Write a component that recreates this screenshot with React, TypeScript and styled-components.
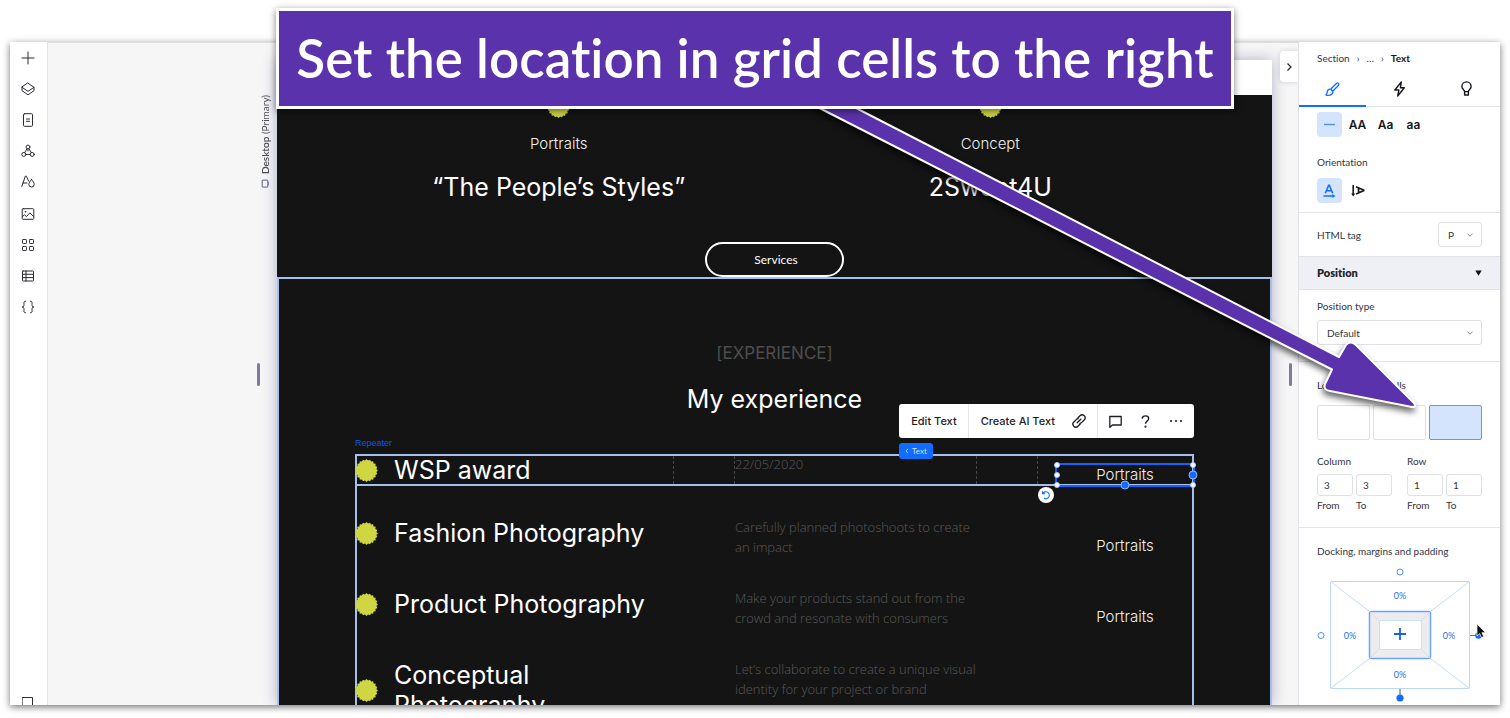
import React from "react";
import styled, { createGlobalStyle, css } from "styled-components";

const uiFont = '"Lato", "Open Sans", sans-serif';
const siteFont = '"Inter", "Open Sans", sans-serif';
const blue = "#116dff";
const frame = "#a6c0ee";
const ink = "#141414";

const GlobalStyle = createGlobalStyle`
  *, *::before, *::after { box-sizing: border-box; }
  body { margin: 0; background: #fff; }
  button, input, select { font: inherit; color: inherit; margin: 0; }
  button { border: 0; padding: 0; background: none; cursor: pointer; }
  h1, h2, h3, p, ul { margin: 0; padding: 0; font-weight: inherit; list-style: none; }
`;

const Page = styled.div`
  position: relative;
  display: flex;
  height: 100vh;
  padding: 42px 10px 13px;
  overflow: hidden;
  font-family: ${uiFont};
  font-size: 10px;
  font-variant-ligatures: none;
  color: #33343d;
`;

const Editor = styled.div`
  display: flex;
  flex: 1;
  min-width: 0;
  background: #f6f6f6;
  box-shadow: 0 2px 7px rgba(0, 0, 0, 0.55);
  overflow: hidden;
`;

/* ---------- left rail ---------- */

const Rail = styled.nav`
  display: flex;
  flex-direction: column;
  justify-content: space-between;
  width: 38px;
  padding-right: 1px;
  background: #fff;
  border-right: 1px solid #e2e2e4;
  overflow: hidden;
`;

const RailList = styled.div`
  display: flex;
  flex-direction: column;
  height: 281px;
`;

const RailButton = styled.button<{ $clipped?: boolean }>`
  display: grid;
  place-items: center;
  flex: ${(p) => (p.$clipped ? "none" : "1")};
  ${(p) => p.$clipped && css`height: 24px; margin-bottom: -10px;`}
  svg { stroke: #2b2c33; fill: none; stroke-width: 1; stroke-linejoin: round; stroke-linecap: round; }
`;

/* ---------- workspace ---------- */

const Workspace = styled.main`
  display: grid;
  grid-template-columns: 229px minmax(0, 1fr) 26px;
  grid-template-rows: minmax(0, 1fr);
  flex: 1;
  min-width: 0;
  border-top: 1px solid #dcdcde;
  overflow: hidden;
`;

const Gutter = styled.div<{ $pad: number }>`
  display: grid;
  grid-template-rows: minmax(0, 1fr) 23px minmax(0, 1fr);
  justify-items: end;
  padding-right: ${(p) => p.$pad}px;
`;

const Breakpoint = styled.div`
  display: flex;
  align-items: center;
  gap: 5px;
  align-self: start;
  margin: 52px -12px 0 0;
  writing-mode: vertical-rl;
  transform: rotate(180deg);
  font-size: 10px;
  line-height: 14px;
  color: #4a4b55;
  b { font-weight: 600; }
`;

const Handle = styled.span`
  grid-row: 2;
  width: 3px;
  border-radius: 2px;
  background: #7c7b9c;
`;

const CollapseButton = styled.button`
  display: grid;
  place-items: center;
  width: 18px;
  height: 31px;
  margin: 8px -6px 0 0;
  border-radius: 4px 0 0 4px;
  background: #fff;
  box-shadow: 0 0 5px rgba(60, 60, 90, 0.2);
`;

const Stage = styled.div`
  display: flex;
  flex-direction: column;
  margin-top: 17px;
  background: ${ink};
  box-shadow: 0 0 14px rgba(90, 90, 150, 0.45);
  color: #fff;
`;

const SiteHeader = styled.header`
  flex: none;
  height: 35px;
  background: #fff;
`;

const Features = styled.section`
  display: flex;
  flex: none;
  flex-direction: column;
  align-items: center;
  height: 182px;
  padding: 0 66px;
`;

const FeatureRow = styled.div`
  display: grid;
  grid-template-columns: 1fr 1fr;
  align-self: stretch;
`;

const Feature = styled.article`
  display: flex;
  flex-direction: column;
  align-items: center;
`;

const Small = styled.p`
  font-family: ${siteFont};
  font-size: 15px;
  line-height: 20px;
  font-weight: 300;
  text-align: center;
  color: #f0f0f0;
`;

const FeatureLabel = styled(Small)`
  margin-top: 16px;
`;

const Title = styled.h2`
  font-family: ${siteFont};
  font-size: 25px;
  line-height: 30px;
  font-weight: 400;
`;

const FeatureTitle = styled(Title)`
  margin-top: 18px;
`;

const PillButton = styled.button`
  width: 139px;
  height: 35px;
  margin-top: auto;
  padding-left: 3px;
  border: 2px solid #fff;
  border-radius: 18px;
  font-size: 12px;
  color: #fff;
`;

const Experience = styled.section`
  display: flex;
  flex: 1 0 auto;
  flex-direction: column;
  align-items: center;
  padding: 64px 76px 0;
  border: 2px solid ${frame};
`;

const Eyebrow = styled.p`
  font-family: ${siteFont};
  font-size: 17px;
  line-height: 20px;
  color: #4d4d4d;
`;

const ExperienceTitle = styled(Title)`
  margin-top: 21px;
`;

const Repeater = styled.div`
  position: relative;
  display: flex;
  flex: 1;
  flex-direction: column;
  gap: 31px;
  align-self: stretch;
  margin-top: 40px;
  border: 2px solid ${frame};
`;

const Item = styled.article<{ $active?: boolean }>`
  position: relative;
  display: grid;
  grid-template-columns: 316fr 241fr 154fr;
  column-gap: 62px;
  min-height: 40px;
  ${(p) =>
    p.$active &&
    css`
      height: 32px;
      min-height: 0;
      margin: -2px -2px 0;
      border: 2px solid ${frame};
    `}
`;

const ItemName = styled.div<{ $active?: boolean }>`
  display: flex;
  align-items: center;
  align-self: start;
  gap: 16px;
  margin: ${(p) => (p.$active ? "-1px 0 0 -2px" : "1px 0 8px -2px")};
  svg { flex: none; }
`;

const ItemText = styled.p<{ $date?: boolean }>`
  margin: ${(p) => (p.$date ? -2 : 0)}px -8px 0 0;
  font-family: "Open Sans", sans-serif;
  font-size: 13px;
  line-height: 20px;
  font-weight: 300;
  color: #5a5a5a;
`;

const ItemKind = styled(Small)`
  align-self: end;
  margin: 0 -2px 1px 18px;
`;

const Guides = styled.div`
  position: absolute;
  inset: 0;
  display: grid;
  grid-template-columns: 316fr 62px 241fr 62px 154fr;
  span:nth-child(even) { border: 1px dashed #454545; border-width: 0 1px; }
`;

const SelectedText = styled.div`
  position: absolute;
  top: 7px;
  right: -3px;
  width: 140px;
  height: 24px;
  border: 2px solid #0f62fe;
`;

const Knob = styled.i<{ $x: number; $y: number; $dock?: boolean }>`
  position: absolute;
  left: ${(p) => p.$x}%;
  top: ${(p) => p.$y}%;
  width: ${(p) => (p.$dock ? 9 : 6)}px;
  height: ${(p) => (p.$dock ? 9 : 6)}px;
  transform: translate(-50%, -50%);
  border-radius: 50%;
  background: ${(p) => (p.$dock ? "#116dff" : "#fff")};
  border: ${(p) => (p.$dock ? "1px solid #8fb4f5" : "1px solid #a9c8ff")};
`;

const UndoButton = styled.button`
  position: absolute;
  top: 31px;
  right: 138px;
  display: grid;
  place-items: center;
  width: 16px;
  height: 16px;
  border-radius: 50%;
  background: #fff;
`;

const RepeaterLabel = styled.span`
  position: absolute;
  left: -2px;
  top: -19px;
  font: 9px/12px "Liberation Sans", sans-serif;
  color: #0f55e8;
`;

const FloatingBar = styled.div`
  position: absolute;
  right: -2px;
  top: -52px;
  display: flex;
  height: 34px;
  border-radius: 3px;
  background: #fff;
  color: #1c1d24;
  font-family: ${siteFont};
  font-size: 11px;
`;

const BarGroup = styled.div`
  display: flex;
  align-items: center;
  gap: 17px;
  padding: 0 11px 0 12px;
  & + & { border-left: 1px solid #e6e6ea; }
  & + & + & { padding-left: 11px; }
  button { display: grid; place-items: center; font-weight: 500; }
  svg { display: block; }
`;

const TextTag = styled.button`
  position: absolute;
  right: 259px;
  top: -13px;
  display: flex;
  align-items: center;
  justify-content: center;
  gap: 3px;
  width: 34px;
  height: 16px;
  border-radius: 3px;
  background: #116dff;
  font-size: 8px;
  color: #cfe0ff;
`;

/* ---------- inspector ---------- */

const Inspector = styled.aside`
  width: 202px;
  flex: none;
  background: #fff;
  border-left: 1px solid #e0e0e6;
  line-height: 16px;
  overflow: hidden;
`;

const Crumbs = styled.nav`
  display: flex;
  align-items: center;
  gap: 7px;
  height: 31px;
  padding: 0 18px;
  b { font-weight: 700; color: #16171d; }
`;

const Tabs = styled.div`
  display: grid;
  grid-template-columns: repeat(3, 1fr);
  height: 34px;
  border-bottom: 1px solid #e3e3e9;
`;

const Tab = styled.button<{ $active?: boolean }>`
  display: grid;
  place-items: center;
  color: ${(p) => (p.$active ? blue : "#16171d")};
  border-bottom: 2px solid ${(p) => (p.$active ? blue : "transparent")};
  margin-bottom: -1px;
`;

const Section = styled.section<{ $pad: string }>`
  padding: ${(p) => p.$pad};
  border-bottom: 1px solid #e3e3e9;
  &:last-child { border-bottom: 0; }
`;

const Inline = styled.div`
  display: flex;
  align-items: center;
  gap: 3px;
`;

const Label = styled.label<{ $mt?: number; $mb?: number }>`
  display: block;
  margin-top: ${(p) => p.$mt ?? 0}px;
  margin-bottom: ${(p) => p.$mb ?? 0}px;
`;

const Toggle = styled.button<{ $active?: boolean }>`
  display: grid;
  place-items: center;
  width: 25px;
  height: 25px;
  border-radius: 4px;
  font-family: ${siteFont};
  font-size: 12px;
  font-weight: 600;
  color: ${(p) => (p.$active ? blue : "#16171d")};
  background: ${(p) => (p.$active ? "#d5e4fd" : "transparent")};
`;

const SelectBox = styled.span<{ $width: string }>`
  display: grid;
  align-items: center;
  width: ${(p) => p.$width};
  height: 25px;
  margin-left: auto;
  select, svg { grid-area: 1 / 1; }
  svg { justify-self: end; margin-right: 9px; pointer-events: none; }
  select {
    appearance: none;
    width: 100%;
    height: 25px;
    padding: 0 9px;
    border: 1px solid #dfe0e6;
    border-radius: 3px;
    background: #fff;
  }
`;

const PanelHeader = styled.button`
  display: flex;
  align-items: center;
  justify-content: space-between;
  width: 100%;
  height: 33px;
  padding: 0 18px;
  border-bottom: 1px solid #e3e3e9;
  background: #eff0f5;
  font-size: 11px;
  font-weight: 800;
  color: #24252c;
`;

const Cells = styled.div`
  display: grid;
  grid-template-columns: repeat(3, 1fr);
  gap: 3px;
`;

const Cell = styled.button<{ $active?: boolean }>`
  height: 35px;
  border: 1px solid ${(p) => (p.$active ? "#5b9bff" : "#d3e1f4")};
  border-radius: 2px;
  background: ${(p) => (p.$active ? "#d5e4fd" : "#fff")};
`;

const Ranges = styled.div`
  display: grid;
  grid-template-columns: 1fr 1fr;
  gap: 15px;
  margin-top: 13px;
`;

const Range = styled.fieldset`
  display: grid;
  grid-template-columns: 1fr 1fr;
  column-gap: 3px;
  min-width: 0;
  margin: 0;
  padding: 0;
  border: 0;
  legend { padding: 0; margin-bottom: 5px; }
  label { display: flex; flex-direction: column; gap: 1px; }
  input {
    width: 100%;
    height: 22px;
    padding: 0 6px;
    border: 1px solid #dfe0e6;
    border-radius: 3px;
    background: #fff;
  }
`;

const Docking = styled.svg`
  display: block;
  margin-top: 6px;
  overflow: visible;
  text { font: 9px ${uiFont}; fill: #2a6fe6; text-anchor: middle; }
`;

/* ---------- annotation ---------- */

const Arrow = styled.svg`
  position: absolute;
  top: 90px;
  right: 80px;
  overflow: visible;
  pointer-events: none;
  filter: drop-shadow(-1px 4px 3px rgba(0, 0, 0, 0.6));
`;

const Callout = styled.h1`
  position: absolute;
  top: 8px;
  left: 50%;
  transform: translateX(-50%);
  width: 958px;
  height: 101px;
  border: 3px solid #fff;
  background: #5a32ab;
  box-shadow: 0 2px 7px rgba(0, 0, 0, 0.5);
  font-family: "Lato", sans-serif;
  font-size: 53px;
  line-height: 94px;
  font-weight: 600;
  text-align: center;
  white-space: nowrap;
  color: #fff;
`;

const badgePoints = Array.from({ length: 40 }, (_, i) => {
  const r = i % 2 ? 10 : 11.4;
  const a = (i * Math.PI) / 20;
  return `${(11.5 + r * Math.cos(a)).toFixed(2)},${(11.5 + r * Math.sin(a)).toFixed(2)}`;
}).join(" ");

const Badge = () => (
  <svg width="23" height="23" viewBox="0 0 23 23" aria-hidden="true">
    <polygon points={badgePoints} fill="#d0d641" />
  </svg>
);

const Chevron = ({ size = 6, color = "#7d7e8a" }: { size?: number; color?: string }) => (
  <svg width={size} height={size} viewBox="0 0 6 6" fill="none" stroke={color} strokeWidth="0.9">
    <path d="M0.5 1.8 3 4.2 5.5 1.8" />
  </svg>
);

const railIcons: [string, React.ReactNode][] = [
  ["Add", <path d="M7 1v12M1 7h12" />],
  ["Layers", <path d="M7 1.2 13 5.300 7 9.400 1 5.300ZM1 5.300v3.400L7 12.800l6-4.100v-3.400" />],
  ["Pages", <path d="M3.5.7h7a1 1 0 0 1 1 1v10.600a1 1 0 0 1-1 1h-7a1 1 0 0 1-1-1V1.700a1 1 0 0 1 1-1ZM5.500 6h3M5.500 8.300h3" />],
  ["Masters", <><circle cx="7" cy="3" r="1.900" /><circle cx="2.800" cy="10.400" r="2" /><circle cx="11.200" cy="10.400" r="2" /><path d="M5.900 5 3.700 8.600M8.100 5 10.300 8.600M4.800 10.400h4.400M7 5v2" /></>],
  ["Typography & colors", <><path d="M.8 11.500 4.300 1.200h1L7.600 6M2 8h4" /><path d="M10.500 4.500c1.700 2 2.700 3.500 2.700 4.800a2.700 2.700 0 0 1-5.400 0c0-1.300 1-2.800 2.700-4.800Z" /></>],
  ["Media", <><rect x="1.200" y="1.700" width="11.600" height="10.600" rx="1" /><path d="M1.500 9.500 3.500 7.800 5.500 9.600 8.800 5.800 12.500 9.500" /><circle cx="4.400" cy="4.800" r=".3" /></>],
  ["Apps", <><rect x="1.500" y="1.500" width="4" height="4" rx=".7" /><rect x="8.500" y="1.500" width="4" height="4" rx=".7" /><rect x="1.500" y="8.500" width="4" height="4" rx=".7" /><rect x="8.500" y="8.500" width="4" height="4" rx=".7" /></>],
  ["CMS", <><rect x="1.500" y="2" width="11" height="10" rx=".6" /><path d="M1.500 5.300h11M1.500 8.600h11M5 2v10" /></>],
  ["Code", <path d="M4.500 1.200C2.500 1.200 3 2.700 3 4.500 3 6.500 2.300 7 1 7c1.300 0 2 .5 2 2.500C3 11.300 2.500 12.800 4.500 12.800M9.500 1.200c2 0 1.500 1.500 1.500 3.300 0 2 .7 2.500 2 2.500-1.300 0-2 .5-2 2.500 0 1.800.5 3.300-1.500 3.300" />],
];

const items = [
  { name: "Fashion Photography", text: "Carefully planned photoshoots to create an impact" },
  { name: "Product Photography", text: "Make your products stand out from the crowd and resonate with consumers" },
  { name: "Conceptual Photography", text: "Let’s collaborate to create a unique visual identity for your project or brand" },
];

const knobs: [number, number][] = [[0, 0], [100, 0], [0, 50], [0, 100], [100, 100]];

const RangeFields = ({ title, value }: { title: string; value: string }) => (
  <Range>
    <legend>{title}</legend>
    <label>
      <input defaultValue={value} />
      From
    </label>
    <label>
      <input defaultValue={value} />
      To
    </label>
  </Range>
);

export default function App() {
  return (
    <Page>
      <GlobalStyle />
      <Editor>
        <Rail>
          <RailList>
            {railIcons.map(([name, shape]) => (
              <RailButton key={name} aria-label={name}>
                <svg width="14" height="14" viewBox="0 0 14 14">{shape}</svg>
              </RailButton>
            ))}
          </RailList>
          <RailButton $clipped aria-label="Help">
            <svg width="12" height="12" viewBox="0 0 12 12">
              <rect x=".5" y=".5" width="10" height="11" />
            </svg>
          </RailButton>
        </Rail>

        <Workspace>
          <Gutter $pad={17}>
            <Breakpoint>
              <svg width="9" height="9" viewBox="0 0 9 9" fill="none" stroke="#7b7b9b" strokeWidth="1.300">
                <rect x="1.200" y="1" width="5.600" height="7" rx="1" />
                <path d="M.6 3v3" />
              </svg>
              <span><b>Desktop</b> (Primary)</span>
            </Breakpoint>
            <Handle />
          </Gutter>

          <Stage>
            <SiteHeader />
            <Features>
              <FeatureRow>
                <Feature>
                  <Badge />
                  <FeatureLabel>Portraits</FeatureLabel>
                  <FeatureTitle>“The People’s Styles”</FeatureTitle>
                </Feature>
                <Feature>
                  <Badge />
                  <FeatureLabel>Concept</FeatureLabel>
                  <FeatureTitle>2Sweet4U</FeatureTitle>
                </Feature>
              </FeatureRow>
              <PillButton>Services</PillButton>
            </Features>

            <Experience>
              <Eyebrow>[EXPERIENCE]</Eyebrow>
              <ExperienceTitle>My experience</ExperienceTitle>
              <Repeater>
                <Item $active>
                  <Guides><span /><span /><span /><span /><span /></Guides>
                  <ItemName $active>
                    <Badge />
                    <Title as="h3">WSP award</Title>
                  </ItemName>
                  <ItemText $date>22/05/2020</ItemText>
                  <SelectedText>
                    <Small>Portraits</Small>
                    {knobs.map(([x, y]) => <Knob key={`${x}-${y}`} $x={x} $y={y} />)}
                    <Knob $x={100} $y={50} $dock />
                    <Knob $x={50} $y={100} $dock />
                  </SelectedText>
                </Item>
                {items.map((item) => (
                  <Item key={item.name}>
                    <ItemName>
                      <Badge />
                      <Title as="h3">{item.name}</Title>
                    </ItemName>
                    <ItemText>{item.text}</ItemText>
                    <ItemKind>Portraits</ItemKind>
                  </Item>
                ))}

                <RepeaterLabel>Repeater</RepeaterLabel>
                <TextTag>
                  <svg width="4" height="6" viewBox="0 0 4 6" fill="none" stroke="currentColor" strokeWidth=".8">
                    <path d="M3 .8 1 3l2 2.200" />
                  </svg>
                  Text
                </TextTag>
                <UndoButton aria-label="Undo">
                  <svg width="10" height="10" viewBox="0 0 10 10" fill="none" stroke={blue} strokeWidth="1.100">
                    <path d="M1.500 1.200v2.600h2.700M1.700 3.600A3.500 3.500 0 1 1 3 8.200" />
                  </svg>
                </UndoButton>
                <FloatingBar>
                  <BarGroup><button>Edit Text</button></BarGroup>
                  <BarGroup>
                    <button>Create AI Text</button>
                    <button aria-label="Link">
                      <svg width="14" height="14" viewBox="0 0 14 14" fill="none" stroke="#1c1d24" strokeWidth="1.300" strokeLinecap="round">
                        <path d="M5.200 8.800 8.800 5.200M5.600 4.200 8 1.800a2.900 2.900 0 0 1 4.200 4.200L9.800 8.400a2.900 2.900 0 0 1-2 .9M8.400 9.800 6 12.200A2.900 2.900 0 0 1 1.800 8L4.200 5.600a2.900 2.900 0 0 1 2-.9" />
                      </svg>
                    </button>
                  </BarGroup>
                  <BarGroup>
                    <button aria-label="Comment">
                      <svg width="13" height="13" viewBox="0 0 13 13" fill="none" stroke="#1c1d24" strokeWidth="1.300" strokeLinejoin="round">
                        <path d="M.8 1.500h11.400v8.500H3.500L.8 12.300Z" />
                      </svg>
                    </button>
                    <button aria-label="Help">
                      <svg width="13" height="13" viewBox="0 0 13 13" fill="none" stroke="#1c1d24" strokeWidth="1.400">
                        <path d="M3.200 3.800C3.200 1.800 4.600.9 6.400.9s3.300 1 3.300 2.700c0 2.400-3.200 2.500-3.200 5.200" />
                        <circle cx="6.500" cy="11.700" r=".4" />
                      </svg>
                    </button>
                    <button aria-label="More">
                      <svg width="14" height="13" viewBox="0 0 14 13" fill="#1c1d24">
                        <circle cx="2" cy="6" r="1.100" /><circle cx="7" cy="6" r="1.100" /><circle cx="12" cy="6" r="1.100" />
                      </svg>
                    </button>
                  </BarGroup>
                </FloatingBar>
              </Repeater>
            </Experience>
          </Stage>

          <Gutter $pad={6}>
            <CollapseButton aria-label="Collapse panel">
              <svg width="8" height="10" viewBox="0 0 8 10" fill="none" stroke="#2b2c33" strokeWidth="1.300">
                <path d="M2.500 1.500 6 5 2.500 8.500" />
              </svg>
            </CollapseButton>
            <Handle />
          </Gutter>
        </Workspace>

        <Inspector>
          <Crumbs>
            <span>Section</span><span>›</span><span>…</span><span>›</span><b>Text</b>
          </Crumbs>
          <Tabs>
            <Tab $active aria-label="Design">
              <svg width="15" height="15" viewBox="0 0 15 15" fill="none" stroke="currentColor" strokeWidth="1.300" strokeLinejoin="round">
                <path d="M5.600 7.200 11.400 1.500c.6-.6 1.500-.7 2.100-.1s.5 1.500-.1 2.100L7.700 9.300M5.600 7.200 7.700 9.300M5.600 7.200C4 7 2.700 7.800 2.400 9.400 2.200 10.700 2 11.800 1 13.200c2.500.4 4.600.2 5.800-.9 1-.9 1.200-2 .9-3" />
              </svg>
            </Tab>
            <Tab aria-label="Interactions">
              <svg width="15" height="16" viewBox="0 0 15 16" fill="none" stroke="currentColor" strokeWidth="1.400" strokeLinejoin="round">
                <path d="M9.300 1 2.800 9h4.100l-1.200 6 6.600-8.200H8.400Z" />
              </svg>
            </Tab>
            <Tab aria-label="Tips">
              <svg width="13" height="16" viewBox="0 0 13 16" fill="none" stroke="currentColor" strokeWidth="1.400" strokeLinejoin="round">
                <path d="M4.600 10.600C4.600 9 1.900 8.300 1.900 5.500a4.600 4.600 0 0 1 9.200 0c0 2.800-2.700 3.500-2.700 5.100ZM4.600 10.600v3.400h3.800v-3.400" />
              </svg>
            </Tab>
          </Tabs>

          <Section $pad="5px 18px 9px">
            <Inline>
              <Toggle $active aria-label="None">
                <svg width="11" height="3" viewBox="0 0 11 3"><path d="M0 1.500h11" stroke="#4d91f7" strokeWidth="1.400" /></svg>
              </Toggle>
              <Toggle>AA</Toggle>
              <Toggle>Aa</Toggle>
              <Toggle>aa</Toggle>
            </Inline>
            <Label as="p" $mt={17} $mb={8}>Orientation</Label>
            <Inline>
              <Toggle $active aria-label="Horizontal">
                <svg width="13" height="14" viewBox="0 0 13 14" fill="none" stroke="currentColor" strokeWidth="1.600">
                  <path d="M2.300 9.200 5.700 1.300h.6L9.700 9.200M3.700 6.700h4.600M.5 12h10" />
                  <path d="M9.500 10 12.500 12 9.500 14Z" fill="currentColor" stroke="none" />
                </svg>
              </Toggle>
              <Toggle aria-label="Vertical">
                <svg width="14" height="13" viewBox="0 0 14 13" fill="none" stroke="currentColor" strokeWidth="1.600">
                  <path d="M5 2.700 12.700 6v.6L5 9.900M7.500 4v4.800M2.200 1v9.500" />
                  <path d="M.2 9.500h4L2.200 12.500Z" fill="currentColor" stroke="none" />
                </svg>
              </Toggle>
            </Inline>
          </Section>

          <Section $pad="9px 18px">
            <Inline>
              <Label htmlFor="tag">HTML tag</Label>
              <SelectBox $width="44px">
                <select id="tag" defaultValue="P"><option>P</option></select>
                <Chevron />
              </SelectBox>
            </Inline>
          </Section>

          <PanelHeader>
            Position
            <svg width="7" height="6" viewBox="0 0 7 6"><path d="M.3.500h6.400L3.500 5.800Z" fill="#111" /></svg>
          </PanelHeader>

          <Section $pad="8px 18px 16px">
            <Label htmlFor="type" $mb={6}>Position type</Label>
            <SelectBox $width="100%">
              <select id="type" defaultValue="Default"><option>Default</option></select>
              <Chevron />
            </SelectBox>
          </Section>

          <Section $pad="15px 18px 14px">
            <Label as="p" $mb={12}>Location in grid cells</Label>
            <Cells>
              <Cell aria-label="Column 1" />
              <Cell aria-label="Column 2" />
              <Cell $active aria-label="Column 3" />
            </Cells>
            <Ranges>
              <RangeFields title="Column" value="3" />
              <RangeFields title="Row" value="1" />
            </Ranges>
          </Section>

          <Section $pad="15px 18px 0">
            <Label as="p">Docking, margins and padding</Label>
            <Docking width="165" height="140" viewBox="0 0 165 140" fill="none">
              <rect x="13.500" y="16.500" width="139" height="107" rx="1" stroke="#bcd6fb" />
              <path d="M14 17 52 46M152 17 114 46M14 123 52 94M152 123 114 94" stroke="#c5dbfa" />
              <rect x="52.500" y="46.500" width="61" height="47" rx="2" fill="#ececee" stroke="#6ba5fb" strokeWidth="1.500" />
              <path d="M53 47 62 56M113 47 104 56M53 93 62 84M113 93 104 84" stroke="#dcdce0" />
              <rect x="62.500" y="55.500" width="42" height="29" rx="2" fill="#fff" stroke="#c9defb" />
              <path d="M83 63v12M77 69h12" stroke="#1262ee" strokeWidth="1.800" />
              <text x="83" y="34">0%</text>
              <text x="83" y="113">0%</text>
              <text x="33" y="74">0%</text>
              <text x="132" y="74">0%</text>
              <circle cx="83" cy="7" r="3" stroke="#4f8ef5" />
              <circle cx="4" cy="70.500" r="3" stroke="#4f8ef5" />
              <path d="M83 124v6" stroke="#4b5468" />
              <circle cx="83" cy="133" r="3.600" fill="#116dff" />
              <path d="M153 70.500h7" stroke="#2f7bf5" />
              <circle cx="161.500" cy="70.500" r="3.300" fill="#116dff" />
              <path d="M160 59v12l2.700-2.400 1.800 4 2.200-1-1.800-3.900h3.700Z" fill="#111" stroke="#fff" strokeWidth=".7" />
            </Docking>
          </Section>
        </Inspector>
      </Editor>

      <Arrow width="630" height="330" viewBox="800 90 630 330" aria-hidden="true">
        <path
          d="M786 91 1332 369.500 1325 384Q1323 390 1330 391L1412 407Q1418 407 1413 402L1356 345Q1350 340 1346 345L1339 357 821 90Z"
          fill="#5a32ab"
          stroke="#fff"
          strokeWidth="2"
          strokeLinejoin="round"
        />
      </Arrow>
      <Callout>Set the location in grid cells to the right</Callout>
    </Page>
  );
}
